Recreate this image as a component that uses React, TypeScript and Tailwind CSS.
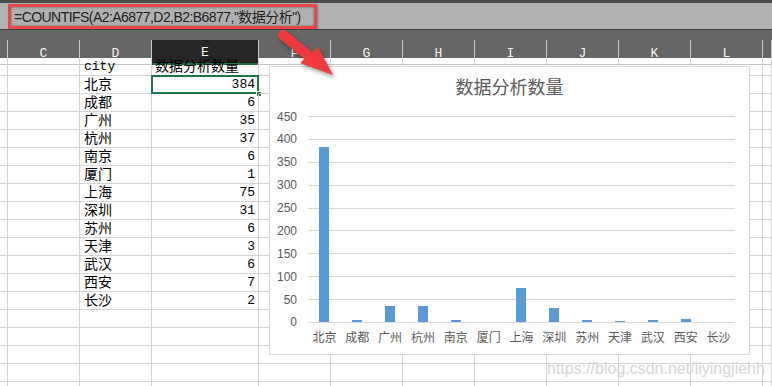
import React from 'react'

// Excel-style sheet: COUNTIFS result column next to a column chart of the same data.

const CITIES: [string, number][] = [
  ['北京', 384],
  ['成都', 6],
  ['广州', 35],
  ['杭州', 37],
  ['南京', 6],
  ['厦门', 1],
  ['上海', 75],
  ['深圳', 31],
  ['苏州', 6],
  ['天津', 3],
  ['武汉', 6],
  ['西安', 7],
  ['长沙', 2],
]

const COLS = ['', 'C', 'D', 'E', 'F', 'G', 'H', 'I', 'J', 'K', 'L', '']
const GRID = 'grid grid-cols-[8px_72px_72px_107px_72px_72px_72px_72px_72px_72px_72px_9px]'
const TICKS = [450, 400, 350, 300, 250, 200, 150, 100, 50, 0]
const ROWS = 19

function FormulaBar() {
  return (
    <div className="h-[26px] bg-[#b2b2b2] pl-[8px] pt-[1px]">
      <div className="flex h-[25px] w-[309px] items-center border-[3px] border-[#ea4548] bg-[#b0b0b0] pl-[3px] shadow-[inset_0_0_3px_rgba(0,0,0,0.35),1px_1px_2px_rgba(0,0,0,0.3)]">
        <span className="text-[14px] leading-none tracking-[-0.55px] text-[#222]">
          =COUNTIFS(A2:A6877,D2,B2:B6877,"数据分析<span className="font-['Liberation_Sans',sans-serif]">")</span>
        </span>
      </div>
    </div>
  )
}

function ColumnHeader() {
  return (
    <div className={`${GRID} h-[18px] bg-[#666]`}>
      {COLS.map((c, i) => (
        <div
          key={i}
          className={
            c === 'E'
              ? 'flex items-center justify-center border-b-2 border-r border-b-[#217346] border-r-[#c4c4c4] bg-[#262626] pt-[3px] font-["Liberation_Mono",monospace] text-[13px] text-[#f4f4f4]'
              : 'flex items-center justify-center border-b border-r border-[#c4c4c4] pt-[3px] font-["Liberation_Mono",monospace] text-[13px] text-[#f4f4f4]'
          }
        >
          {c}
        </div>
      ))}
    </div>
  )
}

function Cell({ col, row }: { col: number; row: number }) {
  let content: React.ReactNode = null
  const city = row >= 1 && row <= CITIES.length ? CITIES[row - 1] : null

  if (col === 2) {
    if (row === 0) content = <span className="text-[13px]">city</span>
    else if (city) content = city[0]
  }
  if (col === 3) {
    if (row === 0) content = '数据分析数量'
    else if (city) content = <span className="text-[13px]">{city[1]}</span>
  }

  const selected = col === 3 && row === 1

  return (
    <div
      className={
        col === 3
          ? 'relative flex h-[18px] items-center justify-end border-b border-r border-[#d4d4d4] pr-[3px] text-[14px] leading-none text-black'
          : 'relative flex h-[18px] items-center border-b border-r border-[#d4d4d4] pl-[4px] text-[14px] leading-none text-black'
      }
    >
      {row === 0 && col === 3 ? <span className="absolute left-[3px]">{content}</span> : content}
      {selected && (
        <>
          <span className="absolute -left-px -top-px bottom-[-1px] right-[-1px] border-2 border-[#217346]" />
          <span className="absolute bottom-[-4px] right-[-4px] h-[6px] w-[6px] border border-white bg-[#217346]" />
        </>
      )}
    </div>
  )
}

function Chart() {
  return (
    <div className="absolute left-[269px] top-[66px] flex h-[289px] w-[481px] flex-col border border-[#d9d9d9] bg-white">
      <div className="pt-[9px] text-center text-[18px] leading-[24px] text-[#595959]">数据分析数量</div>
      <div className="mt-[16px] flex pr-[14px]">
        <div className="flex h-[207px] w-[27px] flex-col justify-between">
          {TICKS.map((t) => (
            <div key={t} className="flex h-px items-center justify-end text-[12px] text-[#595959]">
              {t}
            </div>
          ))}
        </div>
        <div className="ml-[11px] flex flex-1 flex-col">
          <div className="relative flex h-[207px] flex-col justify-between">
            {TICKS.map((t) => (
              <div key={t} className="h-px bg-[#d9d9d9]" />
            ))}
            <div className="absolute inset-x-0 top-0 bottom-px flex items-end">
              {CITIES.map(([c, v]) => (
                <div key={c} className="flex flex-1 justify-center">
                  <div className="w-[10px] bg-[#5b9bd5]" style={{ height: Math.floor((v / 450) * 206) }} />
                </div>
              ))}
            </div>
          </div>
          <div className="mt-[7px] flex">
            {CITIES.map(([c]) => (
              <div key={c} className="flex-1 text-center text-[12px] leading-[16px] text-[#595959]">
                {c}
              </div>
            ))}
          </div>
        </div>
      </div>
    </div>
  )
}

function Arrow() {
  return (
    <svg
      className="absolute left-[270px] top-[25px] h-[60px] w-[70px] overflow-visible drop-shadow-[2px_3px_2px_rgba(0,0,0,0.35)]"
      viewBox="0 0 70 60"
    >
      <line x1="13" y1="10" x2="40" y2="32" stroke="#f03a40" strokeWidth="10" strokeLinecap="round" />
      <polygon points="30,38 48,22 63,50" fill="#f03a40" />
    </svg>
  )
}

export default function App() {
  return (
    <div className="relative h-[386px] w-[772px] overflow-hidden bg-white font-['Liberation_Sans','Noto_Sans_CJK_SC',sans-serif]">
      <div className="h-[3px] bg-[#4e4e4e]" />
      <FormulaBar />
      <div className="h-px bg-[#3e3e3e]" />
      <div className="h-[10px] bg-[#666]" />
      <ColumnHeader />
      <div className={`${GRID} font-['Liberation_Mono','Noto_Sans_CJK_SC',monospace]`}>
        {Array.from({ length: ROWS }).map((_, r) =>
          COLS.map((_, c) => <Cell key={`${r}-${c}`} col={c} row={r} />)
        )}
      </div>
      <Chart />
      <Arrow />
      <div className="absolute left-[547px] top-[361px] text-[16px] leading-none text-[#d6d6d6]">
        https://blog.csdn.net/liyingjiehh
      </div>
    </div>
  )
}
